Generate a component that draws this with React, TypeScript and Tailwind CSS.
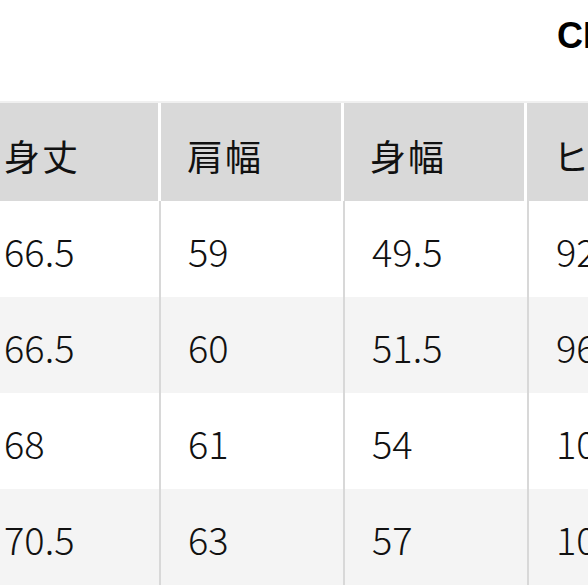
import React from "react"

const headers = ["身丈", "肩幅", "身幅", "ヒップ"]

const rows = [
  ["66.5", "59", "49.5", "92"],
  ["66.5", "60", "51.5", "96"],
  ["68", "61", "54", "100"],
  ["70.5", "63", "57", "104"],
]

export default function App() {
  return (
    <div className="w-[588px] h-[588px] overflow-hidden bg-white [font-family:'Noto_Sans_CJK_JP','Noto_Sans',sans-serif]">
      {/* top bar with cut-off label */}
      <div className="h-[101px] flex items-start pt-[16px] pl-[557px]">
        <p className="w-[31px] shrink-0 overflow-hidden whitespace-nowrap font-['Liberation_Sans'] text-4xl font-bold text-black">
          CM
        </p>
      </div>
      <div className="h-[2px] bg-[#f0f0f0]" />
      <div className="ml-[-22px] w-[800px]">
        <div className="flex h-[98px] bg-[#d9d9d9]">
          {headers.map((h) => (
            <div
              key={h}
              className="w-[183px] shrink-0 border-r-[3px] border-white flex items-center pl-[26px] pt-[6px] text-[36px] text-[#111] tracking-[2px]"
            >
              {h}
            </div>
          ))}
        </div>
        {rows.map((r, i) => (
          <div key={i} className={`flex h-[96px] ${i % 2 === 1 ? "bg-[#f4f4f4]" : "bg-white"}`}>
            {r.map((v, j) => (
              <div
                key={j}
                className="w-[183px] shrink-0 border-r-[2px] mr-[1px] border-[#d8d8d8] flex items-center pl-[26px] pt-[2px] text-[38px] font-light text-[#111]"
              >
                {v}
              </div>
            ))}
          </div>
        ))}
      </div>
    </div>
  )
}
